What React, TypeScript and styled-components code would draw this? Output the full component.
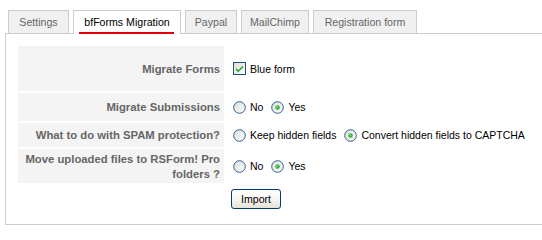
import React from "react";
import styled, { createGlobalStyle, css } from "styled-components";

const Global = createGlobalStyle`
  html, body { margin: 0; padding: 0; background: #fff; }
  body { font-family: "Liberation Sans", Arial, sans-serif; }
`;

const Page = styled.div`
  padding: 10px 0 0 5px;
`;

const TabBar = styled.div`
  display: flex;
  align-items: flex-end;
  gap: 4px;
  padding-left: 3px;
  position: relative;
  z-index: 1;
`;

const Tab = styled.div<{ $active?: boolean; $w: number }>`
  box-sizing: border-box;
  width: ${(p) => p.$w}px;
  height: 23px;
  line-height: 22px;
  text-align: center;
  border: 1px solid #cccccc;
  border-bottom: none;
  background: #f0f0f0;
  color: #666666;
  font-size: 10.6px;
  white-space: nowrap;
  position: relative;
  ${(p) =>
    p.$active &&
    css`
      height: 24px;
      margin-bottom: -1px;
      background: #ffffff;
      color: #000000;
      &::after {
        content: "";
        position: absolute;
        left: 5px;
        right: 6px;
        bottom: 0;
        height: 2px;
        background: #e00000;
      }
    `}
`;

const Panel = styled.div`
  border: 1px solid #cccccc;
  border-right: none;
  padding: 12px 0 15px 12px;
`;

const FormGrid = styled.div`
  display: grid;
  grid-template-columns: 206px 1fr;
  grid-template-rows: 45px 28px 24px 34px auto;
  column-gap: 4px;
  row-gap: 2px;
`;

const Label = styled.div`
  background: #f4f4f4;
  color: #666666;
  font-weight: bold;
  font-size: 11.3px;
  line-height: 15px;
  padding: 1px 4px 0;
  display: flex;
  align-items: center;
  justify-content: flex-end;
  text-align: right;
`;

const Spacer = styled.div``;

const Value = styled.div`
  display: flex;
  align-items: center;
  gap: 8px;
  padding-left: 5px;
  font-size: 10.5px;
  color: #000;
`;

const Option = styled.label`
  display: inline-flex;
  align-items: center;
  gap: 4px;
  white-space: nowrap;
`;

const BoxIcon = styled.svg`
  display: block;
  width: 13px;
  height: 13px;
  flex: none;
`;

const ButtonCell = styled.div`
  padding-left: 3px;
`;

const Button = styled.button`
  box-sizing: border-box;
  margin-top: 4px;
  width: 50px;
  height: 20px;
  border: 1px solid #003c74;
  border-radius: 3px;
  background: linear-gradient(#ffffff 0%, #f4f3ee 60%, #e3e0d6 100%);
  font-family: "Liberation Sans", Arial, sans-serif;
  font-size: 10.6px;
  color: #000;
  padding: 0;
`;

function Checkbox() {
  return (
    <BoxIcon viewBox="0 0 13 13">
      <defs>
        <linearGradient id="cbg" x1="0" y1="0" x2="1" y2="1">
          <stop offset="0" stopColor="#dcdcd7" />
          <stop offset="1" stopColor="#ffffff" />
        </linearGradient>
      </defs>
      <rect x="0.5" y="0.5" width="12" height="12" fill="url(#cbg)" stroke="#1c5180" />
      <path d="M3 6 L5.2 8.3 L10 3.5 L10 5.5 L5.2 10.3 L3 8 Z" fill="#21a121" />
    </BoxIcon>
  );
}

function Radio({ checked }: { checked?: boolean }) {
  return (
    <BoxIcon viewBox="0 0 13 13">
      <defs>
        <linearGradient id="rbg" x1="0" y1="0" x2="1" y2="1">
          <stop offset="0" stopColor="#dcdcd7" />
          <stop offset="1" stopColor="#ffffff" />
        </linearGradient>
        <radialGradient id="rdot" cx="0.4" cy="0.4" r="0.6">
          <stop offset="0" stopColor="#6ee06e" />
          <stop offset="1" stopColor="#1e9c1e" />
        </radialGradient>
      </defs>
      <circle cx="6.5" cy="6.5" r="5.8" fill="url(#rbg)" stroke="#2f5f8f" strokeWidth="1" />
      {checked && <circle cx="6.5" cy="6.5" r="2.2" fill="url(#rdot)" />}
    </BoxIcon>
  );
}

const tabs = [
  { label: "Settings", w: 61 },
  { label: "bfForms Migration", w: 108 },
  { label: "Paypal", w: 52 },
  { label: "MailChimp", w: 68 },
  { label: "Registration form", w: 104 },
];

export default function App() {
  return (
    <>
      <Global />
      <Page>
        <TabBar>
          {tabs.map((t, i) => (
            <Tab key={t.label} $w={t.w} $active={i === 1}>
              {t.label}
            </Tab>
          ))}
        </TabBar>
        <Panel>
          <FormGrid>
            <Label>Migrate Forms</Label>
            <Value>
              <Option>
                <Checkbox />
                Blue form
              </Option>
            </Value>

            <Label>Migrate Submissions</Label>
            <Value>
              <Option>
                <Radio />
                No
              </Option>
              <Option>
                <Radio checked />
                Yes
              </Option>
            </Value>

            <Label>What to do with SPAM protection?</Label>
            <Value>
              <Option>
                <Radio />
                Keep hidden fields
              </Option>
              <Option>
                <Radio checked />
                Convert hidden fields to CAPTCHA
              </Option>
            </Value>

            <Label>Move uploaded files to RSForm! Pro folders ?</Label>
            <Value>
              <Option>
                <Radio />
                No
              </Option>
              <Option>
                <Radio checked />
                Yes
              </Option>
            </Value>

            <Spacer />
            <ButtonCell>
              <Button>Import</Button>
            </ButtonCell>
          </FormGrid>
        </Panel>
      </Page>
    </>
  );
}
